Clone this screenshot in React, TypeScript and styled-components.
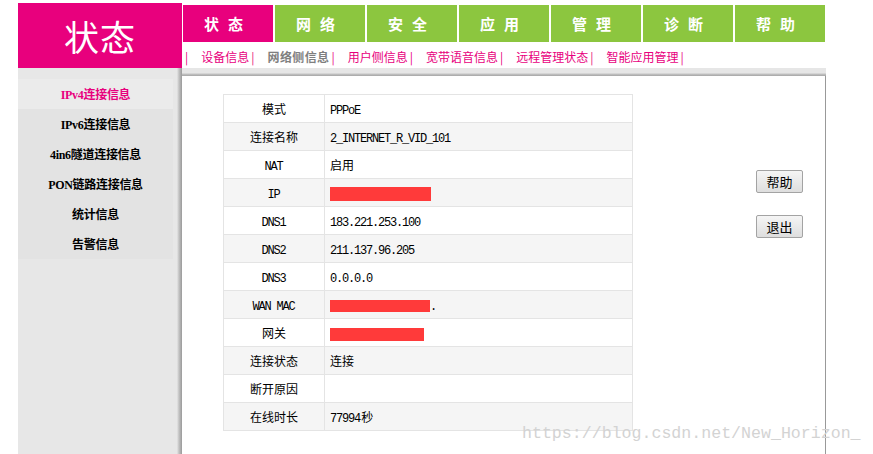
import React from "react";
import styled, { createGlobalStyle } from "styled-components";

const PINK = "#e8007d";
const GREEN = "#8cc63f";

const GlobalStyle = createGlobalStyle`
  html, body {
    margin: 0;
    padding: 0;
    background: #fff;
  }
  body {
    font-family: "Noto Sans CJK SC", sans-serif;
    font-size: 12px;
    color: #000;
  }
`;

const Page = styled.div`
  position: relative;
  display: flex;
  height: 100vh;
  padding-left: 18px;
  overflow: hidden;
`;

const Side = styled.div`
  width: 164px;
  display: flex;
  flex-direction: column;
  padding-top: 3px;
`;

const Logo = styled.div`
  height: 65px;
  background: ${PINK};
  color: #fff;
  font-size: 35px;
  display: flex;
  align-items: center;
  justify-content: center;
  letter-spacing: 1px;
`;

const SideNav = styled.div`
  flex: 1;
  padding-top: 11px;
  background: linear-gradient(
    to right,
    #e7e7e7 0,
    #e7e7e7 159px,
    #d2d2d2 160px,
    #b4b4b4 162px,
    #9a9a9a 164px
  );
`;

const SideItem = styled.div<{ $active?: boolean }>`
  width: 155px;
  height: 30px;
  display: flex;
  align-items: center;
  justify-content: center;
  font-family: "Liberation Serif", "Noto Sans CJK SC", serif;
  font-weight: bold;
  font-size: 12px;
  letter-spacing: -0.3px;
  background: ${(p) => (p.$active ? "#ebebeb" : "#e3e3e3")};
  color: ${(p) => (p.$active ? PINK : "#000")};
`;

const Main = styled.div`
  width: 644px;
  display: flex;
  flex-direction: column;
`;

const Tabs = styled.div`
  display: flex;
  gap: 2px;
  margin-top: 5px;
  padding-left: 1px;
  height: 37px;
`;

const Tab = styled.div<{ $active?: boolean }>`
  width: 90px;
  display: flex;
  align-items: center;
  justify-content: center;
  background: ${(p) => (p.$active ? PINK : GREEN)};
  color: #fff;
  font-weight: bold;
  font-size: 15px;
  letter-spacing: 9px;
`;

const SubNav = styled.div`
  height: 26px;
  display: flex;
  align-items: center;
  padding: 2px 0 0 3px;
  box-sizing: border-box;
  color: ${PINK};
  font-size: 12px;
`;

const SubItem = styled.span<{ $active?: boolean }>`
  margin-left: 13px;
  color: ${(p) => (p.$active ? "#7f7f7f" : PINK)};
  font-weight: ${(p) => (p.$active ? "bold" : "normal")};
  letter-spacing: ${(p) => (p.$active ? "0.4px" : "0")};
`;

const Pipe = styled.span<{ $lead?: boolean }>`
  margin-left: ${(p) => (p.$lead ? 0 : 2)}px;
  color: ${PINK};
`;

const Band = styled.div`
  height: 8px;
  background: linear-gradient(#e6e6e6 0, #e6e6e6 5px, #c4c4c4 6px, #a6a6a6 8px);
`;

const Content = styled.div`
  flex: 1;
  display: flex;
  align-items: flex-start;
  padding: 18px 0 0 41px;
  border-right: 1px solid #999;
`;

const Table = styled.table`
  border-collapse: collapse;
  table-layout: fixed;
  width: 410px;
`;

const Row = styled.tr<{ $odd: boolean }>`
  background: ${(p) => (p.$odd ? "#f5f5f5" : "#fff")};
`;

const Label = styled.td`
  width: 90px;
  height: 27px;
  padding: 0 5px;
  border: 1px solid #e4e4e4;
  text-align: center;
`;

const Value = styled.td`
  height: 27px;
  padding: 0 5px;
  border: 1px solid #e4e4e4;
`;

const Latin = styled.span`
  font-family: "Liberation Mono", monospace;
  font-size: 12px;
  letter-spacing: -1.2px;
  padding-right: 1.2px;
`;

const Redacted = styled.span<{ $w: number; $h: number }>`
  display: inline-block;
  vertical-align: middle;
  width: ${(p) => p.$w}px;
  height: ${(p) => p.$h}px;
  background: #ff3a3a;
`;

const Buttons = styled.div`
  display: flex;
  flex-direction: column;
  gap: 22px;
  margin: 76px 0 0 123px;
`;

const Button = styled.button`
  width: 47px;
  height: 23px;
  padding: 0;
  border: 1px solid #a3a3a3;
  border-radius: 2px;
  background: linear-gradient(#f5f5f5, #dedede);
  font-family: "Noto Sans CJK SC", sans-serif;
  font-size: 13px;
  color: #000;
`;

const Watermark = styled.div`
  position: absolute;
  left: 522px;
  top: 424px;
  font-family: "Liberation Mono", monospace;
  font-size: 16.6px;
  color: #d3d3d3;
  white-space: nowrap;
`;

// split mixed text so ascii runs get the narrow latin face
const mixed = (text: string) =>
  text
    .split(/([\x20-\x7e]+)/)
    .filter((s) => s !== "")
    .map((s, i) =>
      /^[\x20-\x7e]+$/.test(s) ? <Latin key={i}>{s}</Latin> : <span key={i}>{s}</span>
    );

const sideItems = ["IPv4连接信息", "IPv6连接信息", "4in6隧道连接信息", "PON链路连接信息", "统计信息", "告警信息"];
const tabs = ["状态", "网络", "安全", "应用", "管理", "诊断", "帮助"];
const subItems = ["设备信息", "网络侧信息", "用户侧信息", "宽带语音信息", "远程管理状态", "智能应用管理"];

type Info = { label: string; value?: string; red?: [number, number]; dot?: boolean };

const rows: Info[] = [
  { label: "模式", value: "PPPoE" },
  { label: "连接名称", value: "2_INTERNET_R_VID_101" },
  { label: "NAT", value: "启用" },
  { label: "IP", red: [101, 14] },
  { label: "DNS1", value: "183.221.253.100" },
  { label: "DNS2", value: "211.137.96.205" },
  { label: "DNS3", value: "0.0.0.0" },
  { label: "WAN MAC", red: [100, 12], dot: true },
  { label: "网关", red: [94, 13] },
  { label: "连接状态", value: "连接" },
  { label: "断开原因" },
  { label: "在线时长", value: "77994秒" },
];

export default function App() {
  return (
    <>
      <GlobalStyle />
      <Page>
        <Side>
          <Logo>状态</Logo>
          <SideNav>
            {sideItems.map((s, i) => (
              <SideItem key={s} $active={i === 0}>
                {s}
              </SideItem>
            ))}
          </SideNav>
        </Side>

        <Main>
          <Tabs>
            {tabs.map((t, i) => (
              <Tab key={t} $active={i === 0}>
                {t}
              </Tab>
            ))}
          </Tabs>
          <SubNav>
            <Pipe $lead>|</Pipe>
            {subItems.map((s, i) => (
              <React.Fragment key={s}>
                <SubItem $active={i === 1}>{s}</SubItem>
                <Pipe>|</Pipe>
              </React.Fragment>
            ))}
          </SubNav>
          <Band />
          <Content>
            <Table>
              <tbody>
                {rows.map((r, i) => (
                  <Row key={r.label} $odd={i % 2 === 1}>
                    <Label>{mixed(r.label)}</Label>
                    <Value>
                      {r.red ? (
                        <>
                          <Redacted $w={r.red[0]} $h={r.red[1]} />
                          {r.dot && <Latin>.</Latin>}
                        </>
                      ) : (
                        r.value && mixed(r.value)
                      )}
                    </Value>
                  </Row>
                ))}
              </tbody>
            </Table>
            <Buttons>
              <Button>帮助</Button>
              <Button>退出</Button>
            </Buttons>
          </Content>
        </Main>

        <Watermark>https://blog.csdn.net/New_Horizon_</Watermark>
      </Page>
    </>
  );
}
